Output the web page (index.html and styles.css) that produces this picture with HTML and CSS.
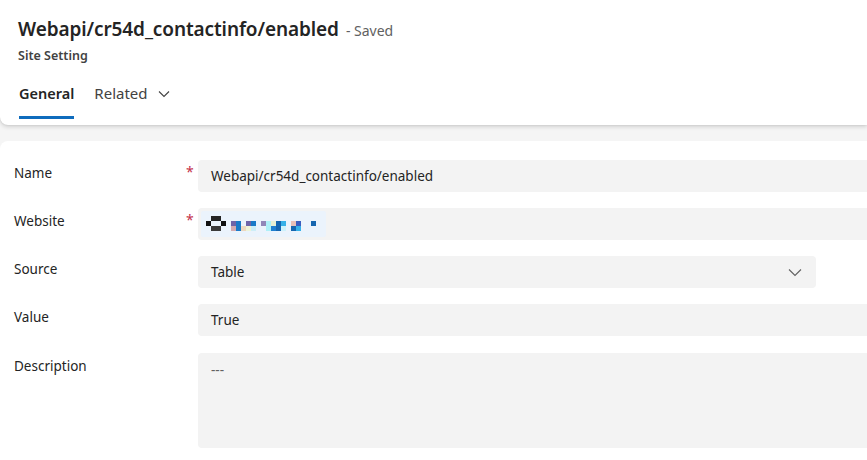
FILE: index.html
```html
<!DOCTYPE html>
<html>
<head>
<meta charset="utf-8">
<link rel="stylesheet" href="styles.css">
</head>
<body>
<div class="page">
  <header class="header">
    <div class="title-row">
      <h1 class="title">Webapi/cr54d_contactinfo/enabled</h1>
      <span class="saved">- Saved</span>
    </div>
    <div class="entity">Site Setting</div>
    <nav class="tabs">
      <div class="tab active">General</div>
      <div class="tab">Related
        <svg class="tab-chev" width="12" height="8" viewBox="0 0 12 8"><path d="M1 1.5 L6 6.5 L11 1.5" fill="none" stroke="#424242" stroke-width="1.1"/></svg>
      </div>
    </nav>
  </header>
  <main class="form">
    <div class="row">
      <div class="label">Name</div>
      <div class="req">*</div>
      <div class="field">Webapi/cr54d_contactinfo/enabled</div>
    </div>
    <div class="row">
      <div class="label">Website</div>
      <div class="req">*</div>
      <div class="field lookup-field">
        <div class="lookup">
          <div class="pix">
            <span style="left:5px;top:0;width:5px;height:5px;background:#111"></span>
            <span style="left:20px;top:0;width:5px;height:5px;background:#111"></span>
            <span style="left:10px;top:-5px;width:10px;height:5px;background:#242424"></span>
            <span style="left:10px;top:5px;width:10px;height:5px;background:#3a3a3a"></span>

            <span style="left:30px;top:0;width:5px;height:5px;background:#6e64a8"></span>
            <span style="left:30px;top:5px;width:5px;height:5px;background:#d4aab0"></span>
            <span style="left:35px;top:0;width:5px;height:10px;background:#1a7ac8"></span>
            <span style="left:40px;top:5px;width:5px;height:5px;background:#ecd8c0"></span>
            <span style="left:45px;top:0;width:5px;height:5px;background:#6e64a8"></span>
            <span style="left:45px;top:5px;width:5px;height:5px;background:#eef4d8"></span>
            <span style="left:50px;top:0;width:5px;height:5px;background:#1a7ac8"></span>
            <span style="left:50px;top:5px;width:5px;height:5px;background:#cdeef8"></span>

            <span style="left:60px;top:0;width:5px;height:5px;background:#9186b8"></span>
            <span style="left:65px;top:0;width:5px;height:10px;background:#aef0f8"></span>
            <span style="left:70px;top:0;width:5px;height:5px;background:#e6efd4"></span>
            <span style="left:70px;top:5px;width:5px;height:5px;background:#1f7fd0"></span>
            <span style="left:75px;top:0;width:5px;height:10px;background:#1566b0"></span>
            <span style="left:80px;top:0;width:5px;height:5px;background:#36b0e8"></span>
            <span style="left:80px;top:5px;width:5px;height:5px;background:#cdf2fb"></span>

            <span style="left:90px;top:0;width:5px;height:5px;background:#e8c0b8"></span>
            <span style="left:95px;top:0;width:5px;height:5px;background:#3a5ec0"></span>
            <span style="left:90px;top:5px;width:5px;height:5px;background:#1566b0"></span>
            <span style="left:95px;top:5px;width:5px;height:5px;background:#36b0e8"></span>

            <span style="left:110px;top:0;width:5px;height:5px;background:#1566b0"></span>
          </div>
        </div>
      </div>
    </div>
    <div class="row">
      <div class="label">Source</div>
      <div class="req"></div>
      <div class="field select">
        <span>Table</span>
        <svg width="14" height="9" viewBox="0 0 14 9"><path d="M1 1.5 L7 7.5 L13 1.5" fill="none" stroke="#616161" stroke-width="1.1"/></svg>
      </div>
    </div>
    <div class="row">
      <div class="label">Value</div>
      <div class="req"></div>
      <div class="field">True</div>
    </div>
    <div class="row desc-row">
      <div class="label">Description</div>
      <div class="req"></div>
      <div class="field textarea">---</div>
    </div>
  </main>
</div>
</body>
</html>
```
FILE: styles.css
```css
* { box-sizing: border-box; }
html, body { margin: 0; padding: 0; }
body {
  background: #f5f5f5;
  font-family: "Segoe UI", "Noto Sans", "Open Sans", sans-serif;
  color: #242424;
  width: 867px;
  height: 460px;
  overflow: hidden;
}
.page { display: flex; flex-direction: column; gap: 16px; }
.header {
  background: #fff;
  height: 125px;
  padding: 16px 0 0 18px;
  border-radius: 0 0 0 8px;
  box-shadow: 0 2px 4px rgba(0,0,0,0.14), 0 0 2px rgba(0,0,0,0.12);
}
.title-row { display: flex; align-items: baseline; gap: 7px; height: 28px; }
.title {
  margin: 0;
  font-size: 19px;
  font-weight: 600;
  letter-spacing: -0.1px;
  color: #242424;
}
.saved { font-size: 14px; color: #616161; }
.entity { font-size: 12.5px; font-weight: 600; color: #424242; margin-top: 3px; }
.tabs { display: flex; gap: 20px; margin-top: 17px; }
.tab {
  font-size: 15px;
  color: #424242;
  height: 38px;
  padding-top: 2px;
  display: flex;
  align-items: flex-start;
  gap: 10px;
  border-bottom: 3px solid transparent;
}
.tab-chev { margin-top: 7px; }
.tab.active { font-weight: 600; font-size: 14.5px; color: #242424; border-bottom-color: #0f6cbd; margin-left: 1px; }
.form {
  background: #fff;
  border-radius: 8px 0 0 0;
  padding: 19px 0 20px 14px;
  display: flex;
  flex-direction: column;
  gap: 16px;
}
.row { display: flex; align-items: flex-start; height: 32px; }
.label { width: 172px; font-size: 13.5px; color: #242424; padding-top: 4px; }
.req { width: 12px; color: #c4314b; font-size: 14px; padding-top: 2px; }
.field {
  flex: 1;
  height: 32px;
  background: #f3f3f3;
  border-radius: 4px 0 0 4px;
  font-size: 13.5px;
  padding: 0 13px;
  display: flex;
  align-items: center;
  color: #242424;
}
.lookup-field { padding: 0 3px; }
.lookup {
  width: 125px;
  height: 26px;
  background: #ebf3fc;
  border-radius: 2px;
}
.pix { position: relative; width: 120px; height: 10px; margin: 10px 0 0 0; }
.pix span { position: absolute; display: block; }
.select { flex: 0 0 618px; border-radius: 4px; justify-content: space-between; padding-right: 14px; }
.desc-row { height: 96px; margin-top: 1px; }
.textarea { height: 95px; align-items: flex-start; padding-top: 8px; color: #616161; }
```
